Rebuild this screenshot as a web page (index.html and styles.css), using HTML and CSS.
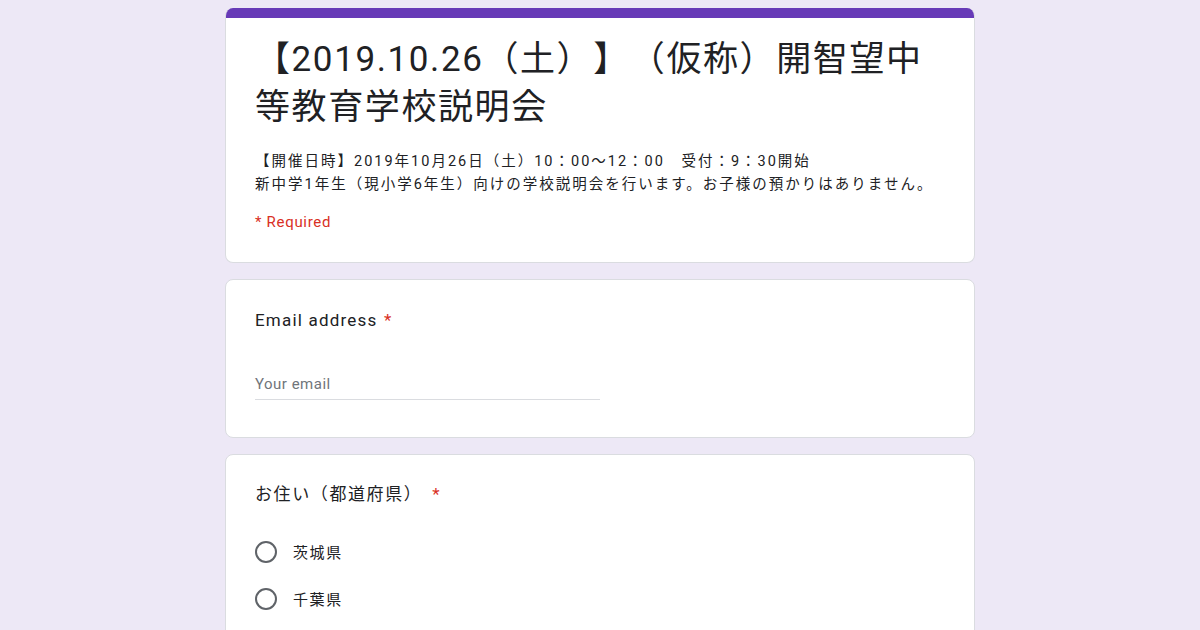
FILE: index.html
```html
<!DOCTYPE html>
<html lang="ja">
<head>
<meta charset="utf-8">
<title>【2019.10.26（土）】（仮称）開智望中等教育学校説明会</title>
<link rel="stylesheet" href="styles.css">
</head>
<body>
<main class="form">
  <section class="card header-card">
    <div class="accent"></div>
    <div class="card-body header-body">
      <h1 class="form-title">【2019.10.26（土）】（仮称）開智望中等教育学校説明会</h1>
      <p class="form-desc">【開催日時】2019年10月26日（土）10：00～12：00　受付：9：30開始<br>新中学1年生（現小学6年生）向けの学校説明会を行います。お子様の預かりはありません。</p>
      <p class="required-note">* Required</p>
    </div>
  </section>

  <section class="card">
    <div class="card-body question">
      <div class="q-title q-title-latin">Email address <span class="star">*</span></div>
      <div class="text-input"><span class="placeholder">Your email</span></div>
    </div>
  </section>

  <section class="card">
    <div class="card-body question radio-question">
      <div class="q-title q-title-cjk">お住い（都道府県） <span class="star star-wide">*</span></div>
      <div class="options">
        <label class="option"><span class="radio"></span><span class="opt-label">茨城県</span></label>
        <label class="option"><span class="radio"></span><span class="opt-label">千葉県</span></label>
      </div>
    </div>
  </section>
</main>
</body>
</html>
```

FILE: styles.css
```css
html, body {
  margin: 0;
  padding: 0;
}

body {
  background: #ede8f6;
  font-family: Roboto, "Noto Sans CJK JP", "Noto Sans", sans-serif;
  color: #202124;
  height: 630px;
  overflow: hidden;
  text-spacing-trim: space-all;
  font-feature-settings: "chws" 0, "halt" 0, "palt" 0;
}

.form {
  width: 750px;
  margin: 8px auto 0;
  display: flex;
  flex-direction: column;
  gap: 16px;
}

.card {
  background: #ffffff;
  border: 1px solid #dadce0;
  border-radius: 8px;
  overflow: hidden;
}

.header-card {
  border-top: none;
}

.accent {
  height: 10px;
  background: #673ab7;
}

.card-body {
  padding: 0 29px;
}

.header-body {
  padding-top: 18px;
  padding-bottom: 30px;
}

.form-title {
  margin: 0;
  font-weight: 400;
  font-size: 35px;
  letter-spacing: 1.6px;
  line-height: 48px;
  color: #202124;
}

.form-desc {
  margin: 18px 0 0;
  font-size: 14.5px;
  letter-spacing: 2px;
  line-height: 23px;
  color: #202124;
}

.required-note {
  margin: 16px 0 0;
  font-size: 15px;
  letter-spacing: 0.7px;
  line-height: 20px;
  color: #d93025;
}

.question {
  padding-top: 28px;
  padding-bottom: 37px;
}

.q-title {
  font-size: 17px;
  letter-spacing: 0.7px;
  line-height: 24px;
  color: #202124;
}

.q-title-latin {
  letter-spacing: 1.2px;
}

.q-title-cjk {
  letter-spacing: 1.6px;
}

.star {
  color: #d93025;
  margin-left: 1px;
}

.star-wide {
  margin-left: 4px;
}

.text-input {
  width: 345px;
  margin-top: 40px;
  padding-bottom: 3px;
  border-bottom: 1px solid #dadce0;
  line-height: 24px;
}

.placeholder {
  font-size: 15px;
  letter-spacing: 0.5px;
  color: #70757a;
}

.radio-question {
  padding-top: 27px;
}

.options {
  margin-top: 22px;
  display: flex;
  flex-direction: column;
}

.option {
  display: flex;
  align-items: center;
  gap: 16px;
  height: 47px;
}

.radio {
  box-sizing: border-box;
  width: 22px;
  height: 22px;
  border: 2px solid #5f6368;
  border-radius: 50%;
  flex: none;
}

.opt-label {
  font-size: 15px;
  letter-spacing: 1.6px;
  color: #202124;
}
```
